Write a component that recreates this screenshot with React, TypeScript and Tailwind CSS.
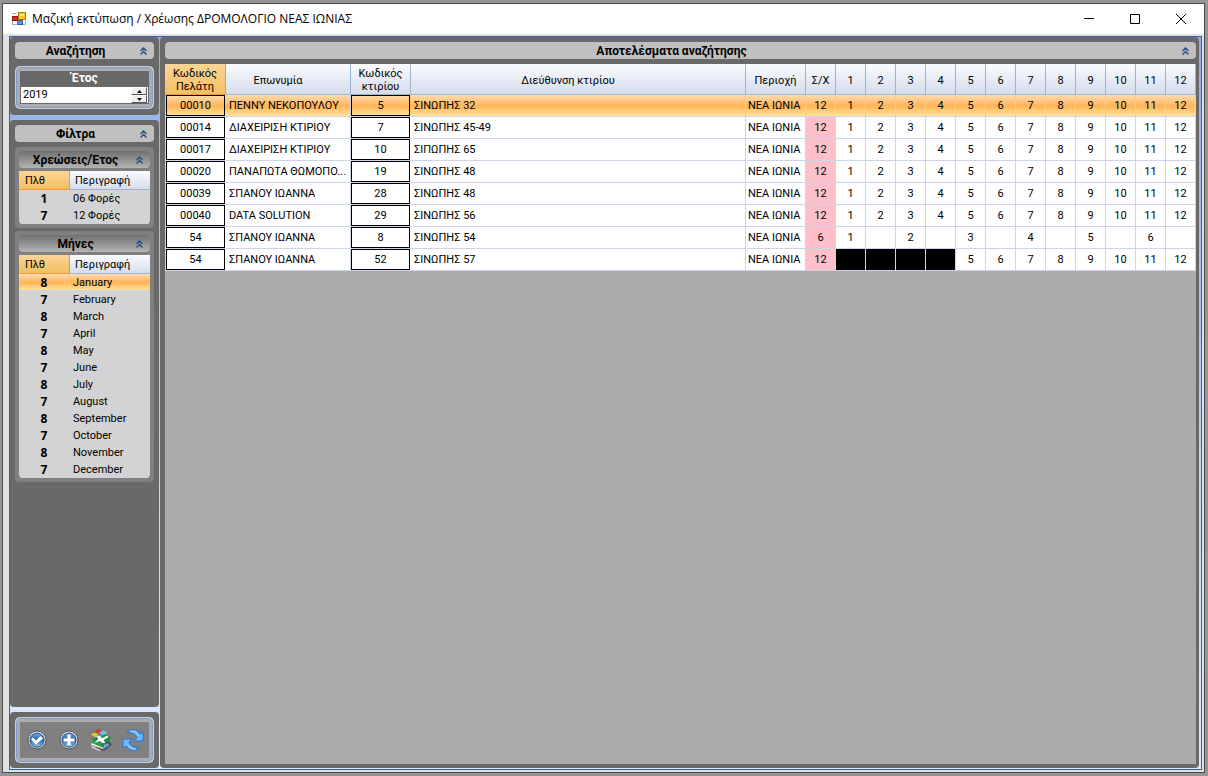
import { useState, type ReactNode } from 'react';
import clsx from 'clsx';

type Month = number | 'locked' | null;

interface Building {
  customer: string;
  name: string;
  code: number;
  address: string;
  charges: number;
  months: Month[];
}

interface Count {
  count: number;
  label: string;
}

const ALL_MONTHS: Month[] = [1, 2, 3, 4, 5, 6, 7, 8, 9, 10, 11, 12];

const BUILDINGS: Building[] = [
  { customer: '00010', name: 'ΠΕΝΝΥ ΝΕΚΟΠΟΥΛΟΥ', code: 5, address: 'ΣΙΝΩΠΗΣ 32', charges: 12, months: ALL_MONTHS },
  { customer: '00014', name: 'ΔΙΑΧΕΙΡΙΣΗ ΚΤΙΡΙΟΥ', code: 7, address: 'ΣΙΝΩΠΗΣ 45-49', charges: 12, months: ALL_MONTHS },
  { customer: '00017', name: 'ΔΙΑΧΕΙΡΙΣΗ ΚΤΙΡΙΟΥ', code: 10, address: 'ΣΙΠΩΠΗΣ 65', charges: 12, months: ALL_MONTHS },
  { customer: '00020', name: 'ΠΑΝΑΠΩΤΑ ΘΩΜΟΠΟ...', code: 19, address: 'ΣΙΝΩΠΗΣ 48', charges: 12, months: ALL_MONTHS },
  { customer: '00039', name: 'ΣΠΑΝΟΥ ΙΩΑΝΝΑ', code: 28, address: 'ΣΙΝΩΠΗΣ 48', charges: 12, months: ALL_MONTHS },
  { customer: '00040', name: 'DATA SOLUTION', code: 29, address: 'ΣΙΝΩΠΗΣ 56', charges: 12, months: ALL_MONTHS },
  {
    customer: '54',
    name: 'ΣΠΑΝΟΥ ΙΩΑΝΝΑ',
    code: 8,
    address: 'ΣΙΝΩΠΗΣ 54',
    charges: 6,
    months: [1, null, 2, null, 3, null, 4, null, 5, null, 6, null],
  },
  {
    customer: '54',
    name: 'ΣΠΑΝΟΥ ΙΩΑΝΝΑ',
    code: 52,
    address: 'ΣΙΝΩΠΗΣ 57',
    charges: 12,
    months: ['locked', 'locked', 'locked', 'locked', 5, 6, 7, 8, 9, 10, 11, 12],
  },
];

const CHARGES: Count[] = [
  { count: 1, label: '06 Φορές' },
  { count: 7, label: '12 Φορές' },
];

const MONTHS: Count[] = [
  { count: 8, label: 'January' },
  { count: 7, label: 'February' },
  { count: 8, label: 'March' },
  { count: 7, label: 'April' },
  { count: 8, label: 'May' },
  { count: 7, label: 'June' },
  { count: 8, label: 'July' },
  { count: 7, label: 'August' },
  { count: 8, label: 'September' },
  { count: 7, label: 'October' },
  { count: 8, label: 'November' },
  { count: 7, label: 'December' },
];

const selectedRow = 'bg-linear-to-b from-[#ffdcb0] via-[#ffb456] to-[#ffe9a0]';
const sortedHead = 'bg-linear-to-b from-[#fad596] to-[#f3bf60] border-[#f09a3e]';
const plainHead = 'bg-linear-to-b from-[#fafcfe] to-[#d5dcec] border-[#9db4d0]';

function FormIcon() {
  return (
    <svg width="14" height="14" viewBox="0 0 14 14" aria-hidden="true">
      <rect x="0.5" y="4.5" width="5" height="4" fill="#c9342a" stroke="#8e1c17" />
      <path d="M.5 2.500v-1h4M.5 9v3.500h4" fill="none" stroke="#a8a8a8" />
      <rect x="5.500" y="8.500" width="5" height="4" fill="#5a94ea" stroke="#2a5cb8" />
      <path d="M11 12.500h2.500V9" fill="none" stroke="#a8a8a8" />
      <rect x="6.500" y="0.5" width="7" height="7" fill="#f7c325" stroke="#a87a0a" />
      <path d="M8 2h4v2H8z" fill="#fde895" />
    </svg>
  );
}

function CollapseIcon() {
  return (
    <svg width="7" height="8" viewBox="0 0 7 8" fill="none" stroke="#2c4f8c" strokeWidth="1.5" aria-hidden="true">
      <path d="M0.5 4 3.5 1l3 3M0.5 7.5l3-3 3 3" />
    </svg>
  );
}

function CheckIcon() {
  return (
    <svg width="22" height="22" viewBox="0 0 22 22" aria-hidden="true">
      <defs>
        <linearGradient id="orb" x1="0" y1="0" x2="0" y2="1">
          <stop offset="0" stopColor="#7ba3dc" />
          <stop offset="0.5" stopColor="#2b62ad" />
          <stop offset="1" stopColor="#8fdcfa" />
        </linearGradient>
        <linearGradient id="rim" x1="0" y1="0" x2="0" y2="1">
          <stop offset="0" stopColor="#f4f4f4" />
          <stop offset="1" stopColor="#b8bcc2" />
        </linearGradient>
      </defs>
      <circle cx="11" cy="11" r="9" fill="url(#rim)" stroke="#55595f" />
      <circle cx="11" cy="11" r="7" fill="url(#orb)" stroke="#28518f" />
      <path d="m5 10.500 2-2 3 3 4.500-4.500 2.500 2.500-7 6z" fill="#fff" />
    </svg>
  );
}

function PlusIcon() {
  return (
    <svg width="22" height="22" viewBox="0 0 22 22" aria-hidden="true">
      <circle cx="11" cy="11" r="9" fill="url(#rim)" stroke="#55595f" />
      <circle cx="11" cy="11" r="7" fill="url(#orb)" stroke="#28518f" />
      <path d="M9.500 5.500h3v4h4v3h-4v4h-3v-4h-4v-3h4z" fill="#fff" />
    </svg>
  );
}

function ExcelIcon() {
  return (
    <svg width="22" height="22" viewBox="0 0 24 24" aria-hidden="true">
      <path d="m6 21 9 3 9-7-4-5z" fill="#3c3c3c" opacity="0.6" />
      <path d="m1 17 3-4 10 5 1 4z" fill="#f2f2f2" />
      <path d="m2 18 1 3m1-2 1 3m1-2 1 3m1-2 1 3m1-2 1 3" stroke="#f2f2f2" />
      <path d="m2 11 14-5 7 3-6 9-4 2-11-5z" fill="#1f8a3f" />
      <path d="m2 11 11 4v5L2 15z" fill="#2aa04c" />
      <path d="m5 3 4-3 3 1-2 4z" fill="#e0312b" />
      <path d="m1 6 4-2 4 2-3 3z" fill="#f5c32e" />
      <path d="m10 4 5-3 4 3-5 3z" fill="#6fc0e8" />
      <path d="m7 8 4-1 2 3 6-3 1 2-5 3 2 4-4-1-2-2-6 2 4-4z" fill="#fff" />
      <path d="m14 16 7-2 1 5-5 4-3-2z" fill="#32577f" />
      <path d="M15.500 17v4m2-5v4m2-4v3" stroke="#cfe3f7" />
    </svg>
  );
}

function RefreshIcon() {
  return (
    <svg width="22" height="22" viewBox="0 0 22 22" fill="#6bb8fb" stroke="#2173d4" strokeLinejoin="round" aria-hidden="true">
      <path d="M5 4C8-.5 15-.5 17.500 5l3.500-2v9h-9l3-3.500C13 4.500 9 3 5 4z" />
      <path d="M17 18C14 22.500 7 22.500 4.500 17L1 19v-9h9l-3 3.500c2 4 6 5.500 10 4.500z" />
      <path d="M8 2.500c3-1 7 0 8.500 4M14 20c-3 .5-7-1-8.500-4.500" fill="none" stroke="#b5dcff" />
    </svg>
  );
}

interface BarProps {
  title: string;
  nested?: boolean;
  onToggle: () => void;
}

function TitleBar({ title, nested, onToggle }: BarProps) {
  return (
    <header
      className={clsx(
        'relative flex h-[17px] shrink-0 items-center justify-center rounded-[4px]',
        nested ? 'bg-linear-to-b from-[#707070] to-[#b4b4b4]' : 'bg-[#c0c0c0]',
      )}
    >
      <h2 className="pt-px pr-[18px] text-[12px] font-bold">{title}</h2>
      <button type="button" aria-label={title} onClick={onToggle} className="absolute right-[7px]">
        <CollapseIcon />
      </button>
    </header>
  );
}

function Framed({ className, children }: { className: string; children: ReactNode }) {
  return (
    <div className="rounded-[5px] bg-[#cfcfcf] p-px">
      <div className="rounded-[5px] border border-[#7a9dd4] bg-[#acacac] p-[3px]">
        <div className={className}>{children}</div>
      </div>
    </div>
  );
}

function CountTable({ title, rows, selected, onSelect }: {
  title: string;
  rows: Count[];
  selected: number;
  onSelect: (i: number) => void;
}) {
  const [open, setOpen] = useState(true);

  return (
    <section className="rounded-[4px] bg-[#808080] p-1">
      <TitleBar title={title} nested onToggle={() => setOpen(!open)} />
      {open && (
        <table className="mt-[3px] w-full table-fixed border-separate border-spacing-0 overflow-hidden rounded-b-[4px] bg-[#d3d3d3]">
          <thead>
            <tr className="h-[19px] text-left">
              <th className={clsx('w-[51px] border-r border-b p-0 pt-px pl-[6px] font-normal', sortedHead)}>Πλθ</th>
              <th className={clsx('border-b p-0 pt-px pl-[5px] font-normal', plainHead)}>Περιγραφή</th>
            </tr>
          </thead>
          <tbody className="leading-[15px]">
            {rows.map((row, i) => (
              <tr
                key={row.label}
                onClick={() => onSelect(i)}
                className={clsx('h-[17px]', i === selected && selectedRow)}
              >
                <td className="border-r border-b border-[#ccd3df] p-0 pt-px text-center font-['Open_Sans',sans-serif] text-[12px] leading-[15px] font-bold">
                  {row.count}
                </td>
                <td className="border-b border-[#ccd3df] p-0 pt-px pl-[3px]">{row.label}</td>
              </tr>
            ))}
          </tbody>
        </table>
      )}
    </section>
  );
}

function Sidebar() {
  const [year, setYear] = useState(2019);
  const [searchOpen, setSearchOpen] = useState(true);
  const [filtersOpen, setFiltersOpen] = useState(true);
  const [charge, setCharge] = useState(-1);
  const [month, setMonth] = useState(0);

  const spin =
    'flex min-h-0 flex-1 items-center justify-center border border-t-white border-r-[#555] border-b-[#555] border-l-white bg-[#f0f0f0]';

  return (
    <aside className="flex w-[149px] shrink-0 flex-col gap-[5px]">
      <section className="flex flex-col gap-[7px] rounded-[4px] bg-[#696969] px-[5px] pt-[5px] pb-[6px]">
        <TitleBar title="Αναζήτηση" onToggle={() => setSearchOpen(!searchOpen)} />
        {searchOpen && (
          <Framed className="bg-[#acacac]">
            <label
              htmlFor="year"
              className="block bg-[#696969] text-center text-[12px] leading-[15px] font-bold text-white"
            >
              Έτος
            </label>
            <div className="flex h-[18px] border border-[#696969] bg-white pr-px">
              <input
                id="year"
                value={year}
                onChange={(e) => setYear(Number(e.target.value) || 0)}
                className="min-w-0 flex-1 pl-[2px] outline-none"
              />
              <div className="flex w-[16px] flex-col">
                <button type="button" aria-label="+" onClick={() => setYear(year + 1)} className={spin}>
                  <svg width="5" height="3" viewBox="0 0 5 3">
                    <path d="M0 3 2.500 0 5 3z" />
                  </svg>
                </button>
                <button type="button" aria-label="-" onClick={() => setYear(year - 1)} className={spin}>
                  <svg width="5" height="3" viewBox="0 0 5 3">
                    <path d="M0 0h5L2.500 3z" />
                  </svg>
                </button>
              </div>
            </div>
          </Framed>
        )}
      </section>

      <section className="flex min-h-0 flex-1 flex-col gap-[5px] rounded-[4px] bg-[#696969] p-[5px]">
        <TitleBar title="Φίλτρα" onToggle={() => setFiltersOpen(!filtersOpen)} />
        {filtersOpen && (
          <div className="flex flex-col gap-[3px]">
            <CountTable title="Χρεώσεις/Έτος" rows={CHARGES} selected={charge} onSelect={setCharge} />
            <CountTable title="Μήνες" rows={MONTHS} selected={month} onSelect={setMonth} />
          </div>
        )}
      </section>

      <section className="rounded-[4px] bg-[#696969] p-[5px]">
        <Framed className="flex h-9 items-center justify-center gap-[10px] bg-[#808080]">
          <button type="button" aria-label="Επιλογή">
            <CheckIcon />
          </button>
          <button type="button" aria-label="Προσθήκη">
            <PlusIcon />
          </button>
          <button type="button" aria-label="Excel">
            <ExcelIcon />
          </button>
          <button type="button" aria-label="Ανανέωση">
            <RefreshIcon />
          </button>
        </Framed>
      </section>
    </aside>
  );
}

function Results() {
  const [open, setOpen] = useState(true);
  const [selected, setSelected] = useState(0);
  const head = clsx('border-r border-b p-0 pt-[2px] font-normal leading-[13px]', plainHead);
  const cell = 'border-r border-b border-[#ccd6e6] p-0';

  return (
    <main className="flex min-w-0 flex-1 flex-col rounded-[4px] bg-[#696969] pt-[5px] pr-[3px] pb-1 pl-[5px]">
      <TitleBar title="Αποτελέσματα αναζήτησης" onToggle={() => setOpen(!open)} />
      <div className="mt-[5px] min-h-0 flex-1 overflow-hidden bg-[#ababab]">
        {open && (
          <table className="w-full table-fixed border-separate border-spacing-0 text-center">
            <thead>
              <tr className="h-[31px]">
                <th className={clsx('w-[61px] border-r border-b p-0 pt-[2px] leading-[13px] font-normal', sortedHead)}>
                  Κωδικός
                  <br />
                  Πελάτη
                </th>
                <th className={clsx(head, 'w-[125px] pr-5')}>Επωνυμία</th>
                <th className={clsx(head, 'w-[60px]')}>
                  Κωδικός
                  <br />
                  κτιρίου
                </th>
                <th className={clsx(head, 'pr-5')}>Διεύθυνση κτιρίου</th>
                <th className={clsx(head, 'w-[60px]')}>Περιοχή</th>
                <th className={clsx(head, 'w-[30px]')}>Σ/Χ</th>
                {ALL_MONTHS.map((m) => (
                  <th key={m} className={clsx(head, 'w-[30px]')}>
                    {m}
                  </th>
                ))}
              </tr>
            </thead>
            <tbody>
              {BUILDINGS.map((b, i) => (
                <tr
                  key={b.code}
                  onClick={() => setSelected(i)}
                  className={clsx('h-[22px]', i === selected ? selectedRow : 'bg-white')}
                >
                  <td className="border-b border-l border-[#ccd6e6] p-0">
                    <div className="mr-px h-[21px] border border-black leading-[19px]">{b.customer}</div>
                  </td>
                  <td className={clsx(cell, 'truncate pl-[3px] text-left')}>{b.name}</td>
                  <td className="border-b border-[#ccd6e6] p-0">
                    <div className="mr-px h-[21px] border border-black leading-[19px]">{b.code}</div>
                  </td>
                  <td className={clsx(cell, 'truncate pl-[3px] text-left')}>{b.address}</td>
                  <td className={clsx(cell, 'truncate pl-[2px] text-left')}>ΝΕΑ ΙΩΝΙΑ</td>
                  <td className={clsx(cell, i !== selected && 'bg-[#ffc0cb]')}>{b.charges}</td>
                  {b.months.map((m, j) => (
                    <td key={j} className={clsx(cell, m === 'locked' && 'bg-black')}>
                      {m !== 'locked' && m}
                    </td>
                  ))}
                </tr>
              ))}
            </tbody>
          </table>
        )}
      </div>
    </main>
  );
}

export default function App() {
  return (
    <div className="h-screen bg-[#969696] pt-[3px] pr-[3px] pb-[3px] pl-[2px] font-[Roboto,'Liberation_Sans',sans-serif] text-[11px] leading-4 text-black">
      <div className="flex h-full flex-col border border-[#4a4a4a] bg-[#e0e0e0]">
        <header className="flex h-[30px] shrink-0 items-center bg-white pl-[9px]">
          <FormIcon />
          <h1 className="ml-[6px] flex-1 font-['Open_Sans',sans-serif] text-[12px]">
            Μαζική εκτύπωση / Χρέωσης ΔΡΟΜΟΛΟΓΙΟ ΝΕΑΣ ΙΩΝΙΑΣ
          </h1>
          <div className="flex">
            <button type="button" aria-label="Ελαχιστοποίηση" className="flex w-[46px] justify-center">
              <svg width="10" height="10" viewBox="0 0 10 10" stroke="#000">
                <path d="M0 4.500h10" />
              </svg>
            </button>
            <button type="button" aria-label="Μεγιστοποίηση" className="flex w-[46px] justify-center">
              <svg width="10" height="10" viewBox="0 0 10 10" fill="none" stroke="#000">
                <path d="M.5.5h9v9h-9z" />
              </svg>
            </button>
            <button type="button" aria-label="Κλείσιμο" className="flex w-[46px] justify-center">
              <svg width="10" height="10" viewBox="0 0 10 10" stroke="#000">
                <path d="m0 0 10 10M10 0 0 10" />
              </svg>
            </button>
          </div>
        </header>
        <div className="flex min-h-0 flex-1 pt-[2px] pr-[2px] pb-[2px] pl-[6px]">
          <div className="flex min-w-0 flex-1 gap-px border border-[#3a5fa5] bg-linear-to-b from-[#8fb0e8] to-[#dfecff] pr-[2px] pb-px">
            <Sidebar />
            <Results />
          </div>
        </div>
      </div>
    </div>
  );
}
